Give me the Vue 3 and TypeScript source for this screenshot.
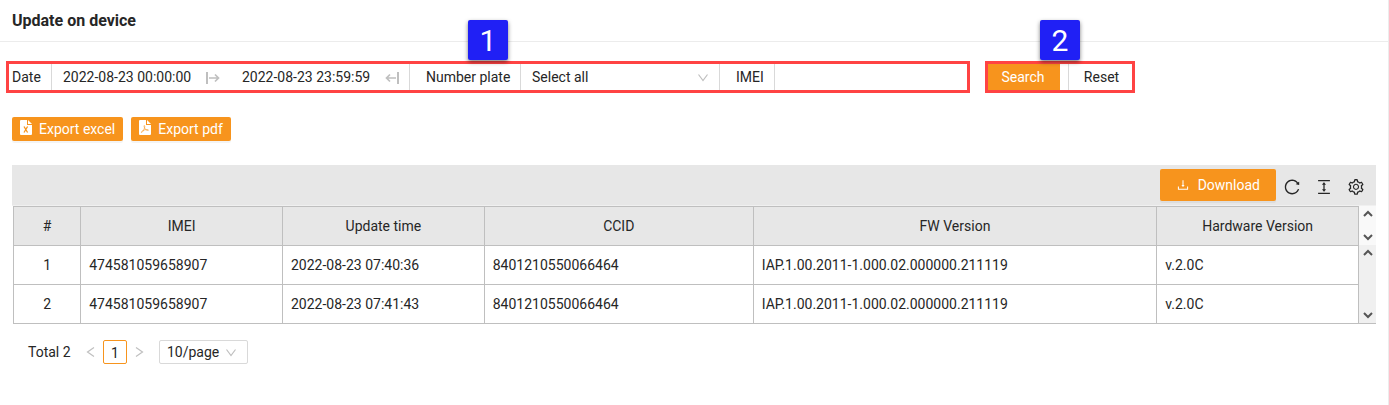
<script setup lang="ts">
import { ref } from 'vue'

interface DeviceUpdate {
  imei: string
  updateTime: string
  ccid: string
  firmware: string
  hardware: string
}

const dateFrom = ref('2022-08-23 00:00:00')
const dateTo = ref('2022-08-23 23:59:59')
const plate = ref('all')
const imei = ref('')
const pageSize = ref('10')

const columns: string[] = ['#', 'IMEI', 'Update time', 'CCID', 'FW Version', 'Hardware Version']

const rows: DeviceUpdate[] = [
  {
    imei: '474581059658907',
    updateTime: '2022-08-23 07:40:36',
    ccid: '8401210550066464',
    firmware: 'IAP.1.00.2011-1.000.02.000000.211119',
    hardware: 'v.2.0C',
  },
  {
    imei: '474581059658907',
    updateTime: '2022-08-23 07:41:43',
    ccid: '8401210550066464',
    firmware: 'IAP.1.00.2011-1.000.02.000000.211119',
    hardware: 'v.2.0C',
  },
]
</script>

<template>
  <div class="page">
    <header class="page-head">
      <h1>Update on device</h1>
    </header>

    <main class="content">
      <form class="filters" @submit.prevent>
        <div class="callout callout-fields">
          <span class="badge">1</span>
          <label class="field-label first" for="date-from">Date</label>
          <div class="range">
            <input id="date-from" v-model="dateFrom" type="text" />
            <svg class="range-icon" viewBox="0 0 14 14" aria-hidden="true">
              <path d="M1 2v12" stroke-width="2" />
              <path d="M3 8h9M9 4.500L12.500 8 9 11.500" stroke-width="1.700" />
            </svg>
            <input id="date-to" v-model="dateTo" class="date-to" type="text" aria-label="Date to" />
            <svg class="range-icon" viewBox="0 0 14 14" aria-hidden="true">
              <path d="M13 2v12" stroke-width="2" />
              <path d="M11 8H2M5 4.500L1.500 8 5 11.500" stroke-width="1.700" />
            </svg>
          </div>
          <label class="field-label plate-label" for="plate">Number plate</label>
          <div class="select-box plate-box">
            <select id="plate" v-model="plate">
              <option value="all">Select all</option>
            </select>
            <svg class="caret" viewBox="0 0 12 12" aria-hidden="true"><path d="M1.500 3.500L6 9.500l4.500-6" /></svg>
          </div>
          <label class="field-label imei-label" for="imei">IMEI</label>
          <input id="imei" v-model="imei" class="imei-input" type="text" />
        </div>

        <div class="callout callout-actions">
          <span class="badge">2</span>
          <button class="search" type="submit">Search</button>
          <button class="reset" type="reset">Reset</button>
        </div>
      </form>

      <div class="exports">
        <button class="primary small" type="button">
          <svg class="file" viewBox="0 0 12 15" aria-hidden="true">
            <path d="M1 0h6v5h5v9a1 1 0 0 1-1 1H1a1 1 0 0 1-1-1V1a1 1 0 0 1 1-1z" fill="#fff" />
            <path d="M8 0l4 4H8z" fill="#fff" />
            <path d="M4 6.500l3.600 6M7.600 6.500l-3.600 6" fill="none" stroke="#f7941d" stroke-width="1.300" />
          </svg>
          <span>Export excel</span>
        </button>
        <button class="primary small" type="button">
          <svg class="file" viewBox="0 0 12 15" aria-hidden="true">
            <path d="M1 0h6v5h5v9a1 1 0 0 1-1 1H1a1 1 0 0 1-1-1V1a1 1 0 0 1 1-1z" fill="#fff" />
            <path d="M8 0l4 4H8z" fill="#fff" />
            <path d="M5.300 5.500c.8 0 .4 2.500-.3 3.800-.7 1.500-1.700 3.200-2.500 3.200-.9-.6 1.200-2.100 3.300-2.600 1.600-.4 3.700-.5 3.700.2 0 .8-1.700.4-2.800-.6C5.500 8.400 4.500 5.500 5.300 5.500z" fill="none" stroke="#f7941d" stroke-width=".6" />
          </svg>
          <span>Export pdf</span>
        </button>
      </div>

      <section class="grid-panel">
        <div class="toolbar">
          <button class="primary download" type="button">
            <svg class="icon-sm" viewBox="0 0 1024 1024" aria-hidden="true">
              <path d="M505.7 661a8 8 0 0 0 12.6 0l112-141.7c4.1-5.2.4-12.9-6.3-12.9h-74.1V168c0-4.4-3.6-8-8-8h-60c-4.4 0-8 3.6-8 8v338.3H400c-6.7 0-10.4 7.7-6.3 12.9l112 141.8zM878 626h-60c-4.4 0-8 3.6-8 8v154H214V634c0-4.4-3.6-8-8-8h-60c-4.4 0-8 3.6-8 8v198c0 17.7 14.3 32 32 32h684c17.7 0 32-14.3 32-32V634c0-4.4-3.6-8-8-8z" />
            </svg>
            <span>Download</span>
          </button>
          <button class="tool" type="button" aria-label="Refresh">
            <svg viewBox="0 0 1024 1024" aria-hidden="true">
              <path d="M909.1 209.3l-56.4 44.1C775.8 155.1 656.2 92 521.9 92 290 92 102.3 279.5 102 511.5 101.7 743.7 289.8 932 521.9 932c181.3 0 335.8-115 394.6-276.1 1.5-4.2-.7-8.9-4.9-10.3l-56.7-19.5a8 8 0 0 0-10.1 4.8c-1.8 5-3.8 10-5.9 14.9-17.3 41-42.1 77.8-73.7 109.4A344.77 344.77 0 0 1 655.9 829c-42.3 17.9-87.4 27-133.8 27-46.5 0-91.5-9.1-133.8-27A341.5 341.5 0 0 1 279 755.2a342.16 342.16 0 0 1-73.7-109.4c-17.9-42.4-27-87.4-27-133.9s9.1-91.5 27-133.9c17.3-41 42.1-77.8 73.7-109.4 31.6-31.6 68.4-56.4 109.3-73.8 42.3-17.9 87.4-27 133.8-27 46.5 0 91.5 9.1 133.8 27a341.5 341.5 0 0 1 109.3 73.8c9.9 9.9 19.2 20.4 27.8 31.4l-60.2 47a8 8 0 0 0 3 14.1l175.6 43c5 1.2 9.9-2.6 9.9-7.7l.8-180.9c-.1-6.6-7.8-10.3-13-6.2z" />
            </svg>
          </button>
          <button class="tool" type="button" aria-label="Row height">
            <svg viewBox="0 0 1024 1024" aria-hidden="true">
              <path d="M840 836H184c-4.4 0-8 3.6-8 8v60c0 4.4 3.6 8 8 8h656c4.4 0 8-3.6 8-8v-60c0-4.4-3.6-8-8-8zm0-724H184c-4.4 0-8 3.6-8 8v60c0 4.4 3.6 8 8 8h656c4.4 0 8-3.6 8-8v-60c0-4.4-3.6-8-8-8zM610.8 378c6 0 9.4-7 5.7-11.7L515.7 238.7a7.14 7.14 0 0 0-11.3 0L403.6 366.3a7.23 7.23 0 0 0 5.7 11.7H476v268h-62.8c-6 0-9.4 7-5.7 11.7l100.8 127.5c2.9 3.7 8.5 3.7 11.3 0l100.8-127.5c3.7-4.7.4-11.7-5.7-11.7H548V378h62.8z" />
            </svg>
          </button>
          <button class="tool" type="button" aria-label="Settings">
            <svg viewBox="0 0 1024 1024" aria-hidden="true">
              <path d="M924.8 625.7l-65.5-56c3.1-19 4.7-38.4 4.7-57.8s-1.6-38.8-4.7-57.8l65.5-56a32.03 32.03 0 0 0 9.3-35.2l-.9-2.6a443.74 443.74 0 0 0-79.7-137.9l-1.8-2.1a32.12 32.12 0 0 0-35.1-9.5l-81.3 28.9c-30-24.6-63.5-44-99.7-57.6l-15.7-85a32.05 32.05 0 0 0-25.8-25.7l-2.7-.5c-52.1-9.4-106.9-9.4-159 0l-2.7.5a32.05 32.05 0 0 0-25.8 25.7l-15.8 85.4a351.86 351.86 0 0 0-99 57.4l-81.9-29.1a32 32 0 0 0-35.1 9.5l-1.8 2.1a446.02 446.02 0 0 0-79.7 137.9l-.9 2.6c-4.5 12.5-.8 26.5 9.3 35.2l66.3 56.6c-3.1 18.8-4.6 38-4.6 57.1 0 19.2 1.5 38.4 4.6 57.1L99 625.5a32.03 32.03 0 0 0-9.3 35.2l.9 2.6c18.1 50.4 44.9 96.9 79.7 137.9l1.8 2.1a32.12 32.12 0 0 0 35.1 9.5l81.9-29.1c29.8 24.5 63.1 43.9 99 57.4l15.8 85.4a32.05 32.05 0 0 0 25.8 25.7l2.7.5a449.4 449.4 0 0 0 159 0l2.7-.5a32.05 32.05 0 0 0 25.8-25.7l15.7-85a350 350 0 0 0 99.7-57.6l81.3 28.9a32 32 0 0 0 35.1-9.5l1.8-2.1c34.8-41.1 61.6-87.5 79.7-137.9l.9-2.6c4.5-12.3.8-26.3-9.3-35zM788.3 465.9c2.5 15.1 3.8 30.6 3.8 46.1s-1.3 31-3.8 46.1l-6.6 40.1 74.7 63.9a370.03 370.03 0 0 1-42.6 73.6L721 702.8l-31.4 25.8c-23.9 19.6-50.5 35-79.3 45.8l-38.1 14.3-17.9 97a377.5 377.5 0 0 1-85 0l-17.9-97.2-37.8-14.5c-28.5-10.8-55-26.2-78.7-45.7l-31.4-25.9-93.4 33.2c-17-22.9-31.2-47.6-42.6-73.6l75.5-64.5-6.5-40c-2.4-14.9-3.7-30.3-3.7-45.5 0-15.3 1.2-30.6 3.7-45.5l6.5-40-75.5-64.5c11.3-26.1 25.6-50.7 42.6-73.6l93.4 33.2 31.4-25.9c23.7-19.5 50.2-34.9 78.7-45.7l37.9-14.3 17.9-97.2c28.1-3.2 56.8-3.2 85 0l17.9 97 38.1 14.3c28.7 10.8 55.4 26.2 79.3 45.8l31.4 25.8 92.8-32.9c17 22.9 31.2 47.6 42.6 73.6L781.8 426l6.5 39.9zM512 326c-97.2 0-176 78.8-176 176s78.8 176 176 176 176-78.8 176-176-78.8-176-176-176zm79.2 255.2A111.6 111.6 0 0 1 512 614c-29.9 0-58-11.7-79.2-32.8A111.6 111.6 0 0 1 400 502c0-29.9 11.7-58 32.8-79.2C454 401.6 482.1 390 512 390c29.9 0 58 11.6 79.2 32.8A111.6 111.6 0 0 1 624 502c0 29.9-11.7 58-32.8 79.2z" />
            </svg>
          </button>
        </div>

        <div class="table-wrap">
          <table>
            <colgroup>
              <col class="c-index" />
              <col class="c-medium" />
              <col class="c-medium" />
              <col class="c-large" />
              <col class="c-wide" />
              <col class="c-medium" />
            </colgroup>
            <thead>
              <tr>
                <th v-for="name in columns" :key="name" scope="col">{{ name }}</th>
              </tr>
            </thead>
            <tbody>
              <tr v-for="(row, i) in rows" :key="i">
                <td class="index">{{ i + 1 }}</td>
                <td>{{ row.imei }}</td>
                <td>{{ row.updateTime }}</td>
                <td>{{ row.ccid }}</td>
                <td>{{ row.firmware }}</td>
                <td>{{ row.hardware }}</td>
              </tr>
            </tbody>
          </table>
          <div class="scrolls" aria-hidden="true">
            <div class="scroll scroll-head">
              <svg viewBox="0 0 10 8"><path d="M1 6l4-4 4 4" /></svg>
              <svg viewBox="0 0 10 8"><path d="M1 2l4 4 4-4" /></svg>
            </div>
            <div class="scroll scroll-body">
              <svg viewBox="0 0 10 8"><path d="M1 6l4-4 4 4" /></svg>
              <svg viewBox="0 0 10 8"><path d="M1 2l4 4 4-4" /></svg>
            </div>
          </div>
        </div>
      </section>

      <nav class="pager" aria-label="Pagination">
        <span class="total">Total 2</span>
        <button class="step" type="button" aria-label="Previous page" disabled>
          <svg viewBox="0 0 12 12" aria-hidden="true"><path d="M9 1.500L2.500 6 9 10.500" /></svg>
        </button>
        <button class="current" type="button" aria-current="page">1</button>
        <button class="step" type="button" aria-label="Next page" disabled>
          <svg viewBox="0 0 12 12" aria-hidden="true"><path d="M3 1.500L9.500 6 3 10.500" /></svg>
        </button>
        <div class="select-box size-box">
          <select v-model="pageSize" aria-label="Page size">
            <option value="10">10/page</option>
          </select>
          <svg class="caret" viewBox="0 0 12 12" aria-hidden="true"><path d="M1.500 3.500L6 9.500l4.500-6" /></svg>
        </div>
      </nav>
    </main>
  </div>
</template>

<style>
body {
  margin: 0;
  background: #fff;
}
</style>

<style scoped>
.page {
  box-sizing: border-box;
  min-height: 100vh;
  border-right: 1px solid #ececec;
  color: #262626;
  font-family: Roboto, "Liberation Sans", sans-serif;
  font-size: 14px;
  line-height: 22px;
}

.page *,
.page *::before {
  box-sizing: border-box;
}

button,
input,
select {
  margin: 0;
  padding: 0;
  border: 0;
  border-radius: 0;
  outline: 0;
  background: transparent;
  color: inherit;
  font: inherit;
}

button {
  cursor: pointer;
}

svg {
  display: block;
  flex: none;
}

.page-head {
  padding: 9px 12px 8px;
  border-bottom: 1px solid #ececec;
}

h1 {
  margin: 0;
  font-size: 16px;
  font-weight: 700;
  line-height: 24px;
}

.content {
  padding: 19px 12px 0;
}

.filters {
  display: flex;
  gap: 15px;
  margin-left: -6px;
}

.callout {
  position: relative;
  display: flex;
  height: 32px;
  border: 3px solid #ff4343;
}

.callout-fields {
  flex: 0 1 964px;
  padding-left: 3px;
}

.callout-actions {
  flex: none;
  width: 150px;
}

.badge {
  position: absolute;
  bottom: 30px;
  left: 50%;
  width: 40px;
  height: 40px;
  margin-left: -20px;
  border-radius: 2px;
  background: #2020f5;
  box-shadow: 0 2px 4px rgba(0, 0, 0, 0.5);
  color: #fff;
  font-size: 30px;
  line-height: 42px;
  text-align: center;
}

.field-label {
  flex: none;
  padding-left: 16px;
  border-right: 1px solid #d9d9d9;
  line-height: 26px;
  white-space: nowrap;
}

.field-label.first {
  width: 40px;
  padding-left: 0;
}

.plate-label {
  width: 111px;
}

.imei-label {
  width: 55px;
}

.range {
  display: flex;
  flex: none;
  align-items: center;
  padding: 0 10px 0 11px;
  border-right: 1px solid #d9d9d9;
}

.range input {
  width: 143px;
  height: 26px;
}

.range .date-to {
  width: 143px;
  margin-left: 22px;
}

.range-icon {
  width: 14px;
  height: 14px;
  fill: none;
  stroke: #bfbfbf;
}

.select-box {
  position: relative;
  display: flex;
  align-items: center;
}

.select-box select {
  width: 100%;
  height: 100%;
  appearance: none;
}

.caret {
  position: absolute;
  right: 10px;
  width: 12px;
  height: 12px;
  fill: none;
  stroke: #bfbfbf;
  stroke-width: 1.2;
  pointer-events: none;
}

.plate-box {
  flex: none;
  width: 199px;
  border-right: 1px solid #d9d9d9;
}

.plate-box select {
  padding-left: 11px;
}

.imei-input {
  flex: 1;
  width: 0;
  min-width: 0;
  padding: 0 11px;
}

.search {
  width: 72px;
  padding-right: 2px;
  background: #f7941d;
  color: #fff;
}

.search,
.reset {
  line-height: 26px;
}

.reset {
  width: 64px;
  margin-left: 8px;
  padding-left: 2px;
  border-left: 1px solid #d9d9d9;
}

.primary {
  display: flex;
  align-items: center;
  border-radius: 2px;
  background: #f7941d;
  box-shadow: 0 2px 0 rgba(0, 0, 0, 0.045);
  color: #fff;
}

.exports {
  display: flex;
  gap: 8px;
  margin-top: 24px;
}

.small {
  gap: 7px;
  height: 24px;
  padding: 0 8px;
}

.file {
  width: 12px;
  height: 15px;
  margin-bottom: 3px;
}

.grid-panel {
  margin-top: 24px;
}

.toolbar {
  display: flex;
  align-items: center;
  justify-content: flex-end;
  gap: 14px;
  height: 40px;
  padding-right: 11px;
  background: #e7e7e7;
}

.download {
  gap: 8px;
  height: 32px;
  margin-right: -7px;
  padding: 0 16px;
}

.icon-sm {
  width: 14px;
  height: 14px;
  fill: currentColor;
}

.tool {
  padding-top: 4px;
}

.tool svg {
  width: 18px;
  height: 18px;
  fill: #262626;
}

.table-wrap {
  display: flex;
  padding: 1px 0 0 1px;
  background: linear-gradient(#f0f0f0, #f0f0f0) top / 100% 1px no-repeat;
}

table {
  flex: 1;
  width: 100%;
  border-top: 1px solid #bfbfbf;
  border-left: 1px solid #bfbfbf;
  border-spacing: 0;
  table-layout: fixed;
}

.c-index {
  width: 5%;
}

.c-medium {
  width: 15%;
}

.c-large {
  width: 20%;
}

.c-wide {
  width: 30%;
}

th,
td {
  height: 39px;
  padding: 0 8px;
  border-right: 1px solid #bfbfbf;
  border-bottom: 1px solid #bfbfbf;
  text-align: left;
  white-space: nowrap;
}

th {
  background: #e7e7e7;
  font-weight: 400;
  text-align: center;
}

.index {
  text-align: center;
}

.scrolls {
  display: flex;
  flex: none;
  flex-direction: column;
  width: 17px;
  border-bottom: 1px solid #bfbfbf;
}

.scroll {
  display: flex;
  flex-direction: column;
  align-items: center;
  justify-content: space-between;
  padding: 4px 0;
}

.scroll svg {
  width: 10px;
  height: 8px;
  fill: none;
  stroke: #555;
  stroke-width: 2;
}

.scroll-head {
  height: 39px;
  background: #f9f9f9;
}

.scroll-body {
  flex: 1;
  background: #f0f0f0;
}

.pager {
  display: flex;
  align-items: center;
  margin-top: 16px;
  padding-left: 16px;
}

.total {
  width: 51px;
}

.step {
  display: flex;
  align-items: center;
  justify-content: center;
  width: 24px;
  height: 24px;
}

.step svg {
  width: 12px;
  height: 12px;
  fill: none;
  stroke: #bfbfbf;
  stroke-width: 1.2;
}

.current {
  width: 24px;
  height: 24px;
  padding-top: 1px;
  border: 1px solid #f7941d;
  border-radius: 2px;
}

.size-box {
  width: 89px;
  height: 24px;
  margin-left: 8px;
  border: 1px solid #d9d9d9;
  border-radius: 2px;
}

.size-box select {
  padding-left: 7px;
}
</style>
